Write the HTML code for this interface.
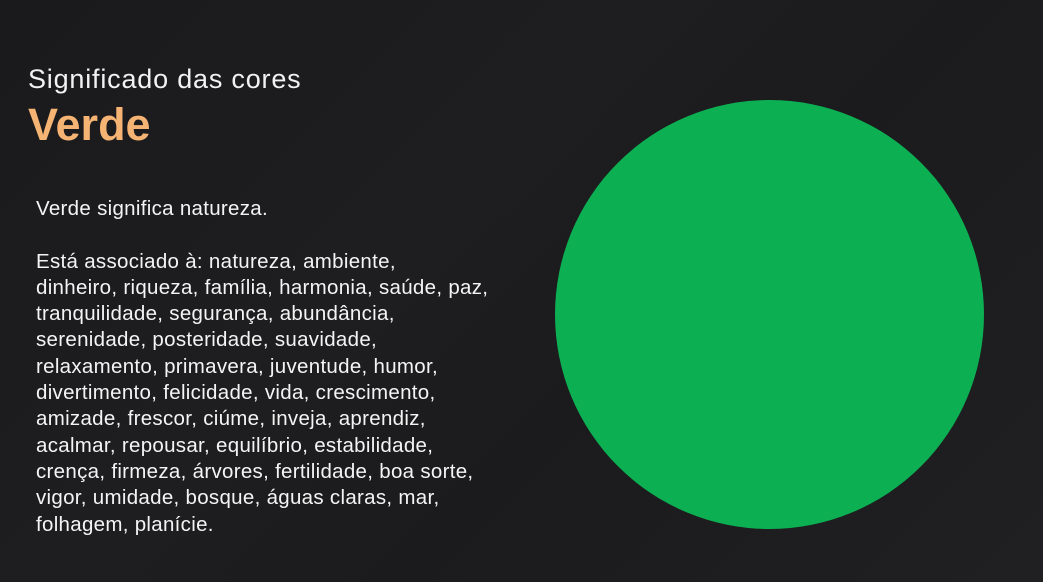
<!DOCTYPE html>
<html><head><meta charset="utf-8"><style>
html,body{margin:0;padding:0;width:1043px;height:582px;overflow:hidden}
body{position:relative;background:#1c1c1e;font-family:"Liberation Sans",sans-serif;color:#fff}
.bg1{position:absolute;left:0;top:0;width:1043px;height:582px;background:linear-gradient(135deg,#1a1a1c 0%,#1e1e20 40%,#1b1b1d 60%,#202022 100%)}
.t1{position:absolute;left:28px;top:64px;font-size:27px;letter-spacing:0.8px;color:#f2f2f2}
.t2{position:absolute;left:28px;top:99px;font-size:45px;font-weight:bold;color:#f5b374}
.body{position:absolute;left:36px;top:196px;font-size:20.5px;line-height:26.3px;color:#f4f4f4;letter-spacing:0.3px;white-space:nowrap}
.circ{position:absolute;left:555px;top:100px;width:429px;height:429px;border-radius:50%;background:#0cb053}
</style></head><body>
<div class="bg1"></div>
<div class="t1">Significado das cores</div>
<div class="t2">Verde</div>
<div class="body">Verde significa natureza.<br><br>Está associado à: natureza, ambiente,<br>dinheiro, riqueza, família, harmonia, saúde, paz,<br>tranquilidade, segurança, abundância,<br>serenidade, posteridade, suavidade,<br>relaxamento, primavera, juventude, humor,<br>divertimento, felicidade, vida, crescimento,<br>amizade, frescor, ciúme, inveja, aprendiz,<br>acalmar, repousar, equilíbrio, estabilidade,<br>crença, firmeza, árvores, fertilidade, boa sorte,<br>vigor, umidade, bosque, águas claras, mar,<br>folhagem, planície.</div>
<div class="circ"></div>
</body></html>
